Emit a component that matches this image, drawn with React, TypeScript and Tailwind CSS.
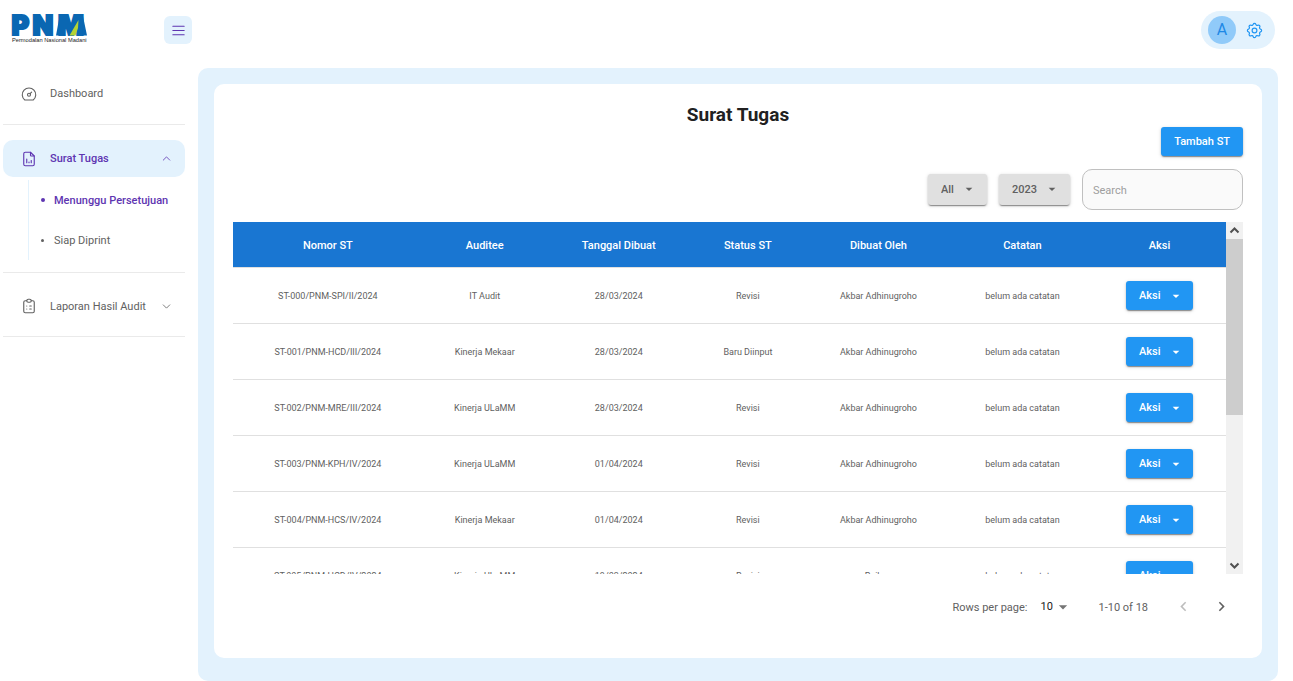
import { useState } from "react";
import {
  TbChevronDown,
  TbChevronUp,
  TbClipboardList,
  TbDashboard,
  TbFileAnalytics,
  TbMenu2,
  TbSettings,
} from "react-icons/tb";
import { MdArrowDropDown, MdChevronLeft, MdChevronRight } from "react-icons/md";

type Letter = {
  nomor: string;
  auditee: string;
  tanggal: string;
  status: string;
  pembuat: string;
  catatan: string;
};

const letters: Letter[] = [
  { nomor: "ST-000/PNM-SPI/II/2024", auditee: "IT Audit", tanggal: "28/03/2024", status: "Revisi", pembuat: "Akbar Adhinugroho", catatan: "belum ada catatan" },
  { nomor: "ST-001/PNM-HCD/III/2024", auditee: "Kinerja Mekaar", tanggal: "28/03/2024", status: "Baru Diinput", pembuat: "Akbar Adhinugroho", catatan: "belum ada catatan" },
  { nomor: "ST-002/PNM-MRE/III/2024", auditee: "Kinerja ULaMM", tanggal: "28/03/2024", status: "Revisi", pembuat: "Akbar Adhinugroho", catatan: "belum ada catatan" },
  { nomor: "ST-003/PNM-KPH/IV/2024", auditee: "Kinerja ULaMM", tanggal: "01/04/2024", status: "Revisi", pembuat: "Akbar Adhinugroho", catatan: "belum ada catatan" },
  { nomor: "ST-004/PNM-HCS/IV/2024", auditee: "Kinerja Mekaar", tanggal: "01/04/2024", status: "Revisi", pembuat: "Akbar Adhinugroho", catatan: "belum ada catatan" },
  { nomor: "ST-005/PNM-HCD/IV/2024", auditee: "Kinerja ULaMM", tanggal: "19/03/2024", status: "Revisi", pembuat: "Raihan", catatan: "belum ada catatan" },
];

const columns = [
  { label: "Nomor ST", width: "w-[19.1%]" },
  { label: "Auditee", width: "w-[12.5%]" },
  { label: "Tanggal Dibuat", width: "w-[14.5%]" },
  { label: "Status ST", width: "w-[11.5%]" },
  { label: "Dibuat Oleh", width: "w-[14.8%]" },
  { label: "Catatan", width: "w-[14.2%]" },
  { label: "Aksi", width: "w-[13.4%]" },
];

const raised =
  "shadow-[0_2px_1px_-1px_rgba(0,0,0,0.3),0_1px_2px_0_rgba(0,0,0,0.2),0_1px_4px_0_rgba(0,0,0,0.12)]";

function Logo() {
  return (
    <a href="#" aria-label="PNM Permodalan Nasional Madani" className="block">
      <svg width="84" height="40" viewBox="0 0 84 40" className="block">
        <g fill="#0a67b2" stroke="#0a67b2" strokeWidth="2" fontFamily="Inter, sans-serif" fontWeight="900" fontSize="27">
          <text x="0.500" y="27.500">P</text>
          <text x="21.500" y="27.500">N</text>
          <text x="47" y="27.500">M</text>
        </g>
        <path d="M49 7 L49 28.500 L45 28.500 Z M71.500 7 L76 28.500 L71 28.500 Z" fill="#0a67b2" />
        <path d="M67.500 13 L67 21 L64.500 28.500 L58.500 28.500 Z" fill="#b4d334" />
        <text x="1" y="35" fill="#222" fontFamily="'Liberation Sans', sans-serif" fontSize="5.700">
          Permodalan Nasional Madani
        </text>
      </svg>
    </a>
  );
}

function Divider() {
  return <hr className="mt-3 mb-[15px] border-t border-[#eaeaea]" />;
}

function Sidebar() {
  return (
    <nav aria-label="Menu" className="w-[198px] shrink-0 pt-[7px] pr-[13px] pl-[3px] text-[11px] text-[#616161]">
      <a href="#" className="flex h-[37px] items-center rounded-[10px] px-[17px]">
        <TbDashboard size={18} strokeWidth={1.5} />
        <span className="ml-3 pt-0.5">Dashboard</span>
      </a>
      <Divider />
      <button type="button" aria-expanded="true" className="flex h-[37px] w-full items-center rounded-[10px] bg-[#e3f2fd] pr-3 pl-[17px] font-medium text-[#5e35b1]">
        <TbFileAnalytics size={18} strokeWidth={1.5} />
        <span className="ml-3 pt-0.5">Surat Tugas</span>
        <TbChevronUp size={13} strokeWidth={1.5} className="ml-auto" />
      </button>
      <ul className="mt-[3px] ml-[25px] flex h-20 flex-col justify-between border-l border-[#e3f2fd]">
        <li>
          <a href="#" className="flex h-10 items-center pl-3 font-medium text-[#5e35b1]">
            <span className="mr-[9px] size-1 rounded-full bg-[#5e35b1]" />
            <span className="pt-0.5">Menunggu Persetujuan</span>
          </a>
        </li>
        <li>
          <a href="#" className="flex h-10 items-center pl-3">
            <span className="mr-2.5 size-[3px] rounded-full bg-[#616161]" />
            <span className="pt-0.5">Siap Diprint</span>
          </a>
        </li>
      </ul>
      <Divider />
      <button type="button" aria-expanded="false" className="flex h-9 w-full items-center rounded-[10px] pr-3 pl-[17px]">
        <TbClipboardList size={18} strokeWidth={1.5} />
        <span className="ml-3 pt-0.5">Laporan Hasil Audit</span>
        <TbChevronDown size={13} strokeWidth={1.5} className="ml-auto" />
      </button>
      <Divider />
    </nav>
  );
}

function FilterSelect({ label, options, width }: { label: string; options: string[]; width: string }) {
  return (
    <div className={`relative ${width}`}>
      <select
        aria-label={label}
        className={`block h-[31px] w-full appearance-none rounded-[3px] bg-[#e0e0e0] pt-0.5 pl-[13px] text-[11px] font-medium text-[#616161] ${raised}`}
      >
        {options.map((option) => (
          <option key={option}>{option}</option>
        ))}
      </select>
      <MdArrowDropDown size={16} className="pointer-events-none absolute top-[7px] right-[10px] text-[#616161]" />
    </div>
  );
}

function ScrollTrack() {
  return (
    <div aria-hidden="true" className="flex w-[17px] shrink-0 flex-col items-center bg-[#f1f1f1] text-[#505050]">
      <svg width="17" height="17" viewBox="0 0 17 17" fill="none" stroke="currentColor" strokeWidth="2">
        <path d="M4.500 10.500 L8.500 6.500 L12.500 10.500" />
      </svg>
      <div className="h-44 w-full bg-[#cdcdcd]" />
      <svg width="17" height="17" viewBox="0 0 17 17" fill="none" stroke="currentColor" strokeWidth="2" className="mt-auto">
        <path d="M4.500 6.500 L8.500 10.500 L12.500 6.500" />
      </svg>
    </div>
  );
}

function LetterTable({ rows }: { rows: Letter[] }) {
  return (
    <div className="mt-3 flex h-[352px]">
      <div className="min-w-0 flex-1 overflow-y-auto [scrollbar-width:none]">
        <table className="w-full table-fixed border-separate border-spacing-0 text-center">
          <thead>
            <tr>
              {columns.map((column) => (
                <th
                  key={column.label}
                  scope="col"
                  className={`sticky top-0 z-10 h-[46px] border-b border-[#e0e0e0] bg-[#1976d2] px-0 pt-[3px] pb-0 text-[11px] font-medium text-white ${column.width}`}
                >
                  {column.label}
                </th>
              ))}
            </tr>
          </thead>
          <tbody className="text-[9px] text-[#616161]">
            {rows.map((row) => (
              <tr key={row.nomor}>
                {[row.nomor, row.auditee, row.tanggal, row.status, row.pembuat, row.catatan].map((value, i) => (
                  <td key={i} className="h-14 border-b border-[#e0e0e0] px-0 pt-0.5 pb-0">
                    {value}
                  </td>
                ))}
                <td className="h-14 border-b border-[#e0e0e0] p-0">
                  <button
                    type="button"
                    aria-haspopup="menu"
                    className={`inline-flex h-[29px] w-[67px] items-center justify-between rounded-[3px] bg-[#2196f3] pr-[9px] pl-[13px] align-middle text-[11px] font-medium text-white ${raised}`}
                  >
                    <span className="pt-0.5">Aksi</span>
                    <MdArrowDropDown size={16} />
                  </button>
                </td>
              </tr>
            ))}
          </tbody>
        </table>
      </div>
      <ScrollTrack />
    </div>
  );
}

function Pagination() {
  return (
    <div className="mt-3 flex h-[42px] items-center justify-end pr-2 text-[11px] text-[#616161]">
      <label htmlFor="rows-per-page" className="pt-0.5">Rows per page:</label>
      <div className="relative ml-[13px] w-[30px]">
        <select id="rows-per-page" className="block w-full appearance-none text-[11px] text-[#212121]">
          <option>10</option>
          <option>25</option>
          <option>50</option>
        </select>
        <MdArrowDropDown size={20} className="pointer-events-none absolute top-[-2px] right-[-3px] text-[#757575]" />
      </div>
      <span className="ml-7 pt-0.5">1-10 of 18</span>
      <button type="button" disabled aria-label="Previous page" className="ml-[26px] pb-0.5 text-[#bdbdbd]">
        <MdChevronLeft size={19} />
      </button>
      <button type="button" aria-label="Next page" className="mr-1 ml-[19px] pb-0.5 text-[#616161]">
        <MdChevronRight size={19} />
      </button>
    </div>
  );
}

export default function App() {
  const [query, setQuery] = useState("");
  const rows = letters.filter((row) =>
    Object.values(row).join(" ").toLowerCase().includes(query.toLowerCase()),
  );

  return (
    <div className="flex min-h-screen flex-col bg-white font-['Roboto',sans-serif]">
      <header className="flex h-[68px] items-start pr-[18px] pl-[11px]">
        <div className="flex w-[181px] items-start justify-between pt-[7px]">
          <Logo />
          <button type="button" aria-label="Toggle menu" className="mt-[9px] grid size-7 place-items-center rounded-md bg-[#e3f2fd] text-[#5e35b1]">
            <TbMenu2 size={17} strokeWidth={1.5} />
          </button>
        </div>
        <button type="button" aria-label="Account settings" className="mt-[11px] ml-auto flex h-[38px] w-[74px] items-center justify-between rounded-full bg-[#e3f2fd] pr-[11px] pl-[7px] text-[#2196f3]">
          <span className="grid size-7 place-items-center rounded-full bg-[#90caf9] text-base text-[#1e88e5]">A</span>
          <TbSettings size={19} strokeWidth={1.5} />
        </button>
      </header>

      <div className="flex flex-1">
        <Sidebar />
        <main className="mr-[15px] flex min-w-0 flex-1 flex-col rounded-[10px] bg-[#e3f2fd] px-4 pt-4 pb-[23px]">
          <section className="flex-1 rounded-[10px] bg-white px-[19px] pt-[19px]">
            <h1 className="text-center text-[19px] leading-6 font-bold text-[#212121]">Surat Tugas</h1>
            <div className="flex justify-end">
              <button type="button" className={`h-[29px] rounded-[3px] bg-[#2196f3] px-[13px] pt-0.5 text-[11px] font-medium text-white ${raised}`}>
                Tambah ST
              </button>
            </div>
            <div className="mt-[13px] flex items-center justify-end gap-3">
              <FilterSelect label="Status" options={["All", "Revisi", "Baru Diinput"]} width="w-[59px]" />
              <FilterSelect label="Tahun" options={["2023", "2024"]} width="w-[71px]" />
              <input
                type="search"
                aria-label="Search"
                placeholder="Search"
                value={query}
                onChange={(event) => setQuery(event.target.value)}
                className="h-[41px] w-[161px] rounded-[10px] border border-[#c0c0c0] bg-[#fafafa] px-[10px] pt-0.5 text-[11px] text-[#212121] placeholder:text-[#9e9e9e]"
              />
            </div>
            <LetterTable rows={rows} />
            <Pagination />
          </section>
        </main>
      </div>
    </div>
  );
}
